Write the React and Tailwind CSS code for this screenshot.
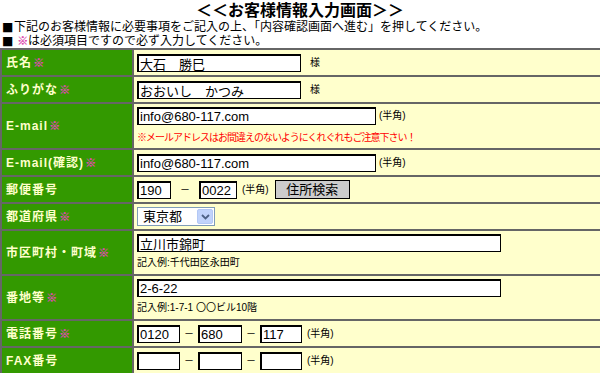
import React from "react";

function Mark() {
  return <span className="text-[#dd4cb0] text-[11px] font-black ml-[1px] leading-[12px] [text-shadow:0.6px_0_0_#dd4cb0]">※</span>;
}

function Box({ w, value = "" }) {
  return (
    <input
      readOnly
      value={value}
      className={w + " h-[18px] bg-white border-t-2 border-l-2 border-r border-b border-black text-[13px] leading-[14px] pl-[1px] text-black outline-none font-['Liberation_Sans','Noto_Sans_CJK_JP',sans-serif]"}
    />
  );
}

function Half({ cls = "" }) {
  return <span className={"text-[10px] leading-[12px] text-black " + cls}>(半角)</span>;
}

function Dash({ cls = "" }) {
  return <span className={"text-[10px] leading-[12px] text-black " + cls}>－</span>;
}

function Square() {
  return <span className="font-['DejaVu_Sans',sans-serif] text-[12px] leading-[13px] w-[12px] inline-block">■</span>;
}

function Label({ children, req }) {
  return (
    <div className="bg-[#339900] flex items-center pl-[4px] text-[#ffffcc] text-[12px] font-bold tracking-[1px] whitespace-nowrap">
      <span>{children}</span>
      {req && <Mark />}
    </div>
  );
}

export default function App() {
  return (
    <div className="w-[600px] h-[373px] overflow-hidden bg-white text-black font-['Liberation_Sans','Noto_Sans_CJK_JP',sans-serif]">
      <div className="h-[20px] flex items-center justify-center text-[16px] font-bold leading-[18px] pt-[1px]">
        ＜＜お客様情報入力画面＞＞
      </div>
      <div className="pl-[2px] text-[12px] leading-[14px] h-[14px] whitespace-nowrap flex items-center">
        <Square />
        <span>下記のお客様情報に必要事項をご記入の上、「内容確認画面へ進む」を押してください。</span>
      </div>
      <div className="pl-[2px] text-[12px] leading-[14px] h-[14px] whitespace-nowrap flex items-center">
        <Square />
        <span className="ml-[3px] text-[#dd4cb0] font-black text-[11px] [text-shadow:0.6px_0_0_#dd4cb0]">※</span>
        <span>は必須項目ですので必ず入力してください。</span>
      </div>

      <div className="w-[606px] grid grid-cols-[130px_1fr] auto-rows-min gap-[2px] bg-[#666666] pt-[2px] pl-[2px]">
        <Label req>氏名</Label>
        <div className="bg-[#ffffcc] h-[25px] flex items-center pl-[3px]">
          <Box w="w-[164px]" value="大石　勝巳" />
          <span className="text-[10px] ml-[9px]">様</span>
        </div>

        <Label req>ふりがな</Label>
        <div className="bg-[#ffffcc] h-[25px] flex items-center pl-[3px]">
          <Box w="w-[164px]" value="おおいし　かつみ" />
          <span className="text-[10px] ml-[9px]">様</span>
        </div>

        <Label req>E-mail</Label>
        <div className="bg-[#ffffcc] h-[44px] flex flex-col pl-[3px] pt-[3px]">
          <div className="flex items-center">
            <Box w="w-[239px]" value="info@680-117.com" />
            <Half cls="ml-[3px]" />
          </div>
          <div className="text-[#ff0000] text-[10px] tracking-[-1px] leading-[12px] mt-[7px] whitespace-nowrap">
            ※メールアドレスはお間違えのないようにくれぐれもご注意下さい！
          </div>
        </div>

        <Label req>E-mail(確認)</Label>
        <div className="bg-[#ffffcc] h-[25px] flex items-center pl-[3px]">
          <Box w="w-[239px]" value="info@680-117.com" />
          <Half cls="ml-[3px]" />
        </div>

        <Label>郵便番号</Label>
        <div className="bg-[#ffffcc] h-[25px] flex items-center pl-[3px]">
          <Box w="w-[34px]" value="190" />
          <Dash cls="mx-[9px]" />
          <Box w="w-[38px]" value="0022" />
          <Half cls="ml-[5px]" />
          <button className="ml-[6px] w-[75px] h-[19px] bg-[#cccccc] border-[1.5px] border-black text-[13px] leading-[15px] text-black flex items-center justify-center">
            住所検索
          </button>
        </div>

        <Label req>都道府県</Label>
        <div className="bg-[#ffffcc] h-[25px] flex items-center pl-[3px]">
          <div className="w-[78px] h-[19px] bg-white border border-[#7f9db9] flex items-center justify-between">
            <span className="text-[13px] leading-[15px] pl-[5px]">東京都</span>
            <span className="w-[16px] h-[15px] mr-[1px] rounded-[2px] bg-[#c1d3fb] border border-[#b3c8f5] flex items-center justify-center">
              <svg width="9" height="6" viewBox="0 0 9 6">
                <path d="M1 1 L4.5 4.5 L8 1" fill="none" stroke="#4d6185" strokeWidth="1.8" />
              </svg>
            </span>
          </div>
        </div>

        <Label req>市区町村・町域</Label>
        <div className="bg-[#ffffcc] h-[43px] flex flex-col pl-[3px] pt-[3px]">
          <Box w="w-[364px]" value="立川市錦町" />
          <div className="text-[10px] leading-[12px] mt-[5px] whitespace-nowrap">記入例:千代田区永田町</div>
        </div>

        <Label req>番地等</Label>
        <div className="bg-[#ffffcc] h-[43px] flex flex-col pl-[3px] pt-[3px]">
          <Box w="w-[364px]" value="2-6-22" />
          <div className="text-[10px] leading-[12px] mt-[5px] whitespace-nowrap">記入例:1-7-1 〇〇ビル10階</div>
        </div>

        <Label req>電話番号</Label>
        <div className="bg-[#ffffcc] h-[25px] flex items-center pl-[3px]">
          <Box w="w-[43px]" value="0120" />
          <Dash cls="mx-[4px]" />
          <Box w="w-[44px]" value="680" />
          <Dash cls="mx-[4px]" />
          <Box w="w-[42px]" value="117" />
          <Half cls="ml-[5px]" />
        </div>

        <Label>FAX番号</Label>
        <div className="bg-[#ffffcc] h-[25px] flex items-center pl-[3px]">
          <Box w="w-[43px]" />
          <Dash cls="mx-[4px]" />
          <Box w="w-[44px]" />
          <Dash cls="mx-[4px]" />
          <Box w="w-[42px]" />
          <Half cls="ml-[5px]" />
        </div>
      </div>
    </div>
  );
}
